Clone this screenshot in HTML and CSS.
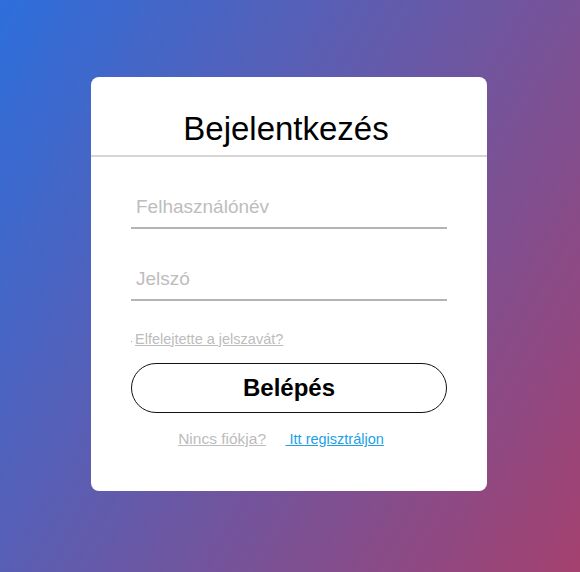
FILE: index.html
```html
<!DOCTYPE html>
<html lang="hu">
<head>
    <meta charset="UTF-8">
    <meta name="viewport" content="width=device-width, initial-scale=1.0">
    <title>Bejelentkezés</title>
    <link rel="stylesheet" href="styles.css">
</head>
<body>
    <div class="card">
        <h1 class="card-title">Bejelentkezés</h1>

        <form class="login-form" onsubmit="return false;">
            <input type="text" class="field" placeholder="Felhasználónév">
            <input type="password" class="field" placeholder="Jelszó">

            <div class="forgot">
                <span class="dot"></span>
                <a href="#">Elfelejtette a jelszavát?</a>
            </div>

            <button type="submit" class="login-btn">Belépés</button>

            <div class="signup">
                <a href="#" class="muted">Nincs fiókja?</a>
                <a href="#" class="register">&nbsp;Itt regisztráljon</a>
            </div>
        </form>
    </div>
</body>
</html>
```

FILE: styles.css
```css
html, body {
    height: 100%;
}
body {
    margin: 0;
    font-family: "Liberation Sans", Arial, sans-serif;
    background: linear-gradient(120deg, #2d6fdc, #a4416f);
    display: flex;
    justify-content: center;
    align-items: flex-start;
}
.card {
    background: white;
    width: 396px;
    margin: 77px 2px 0 0;
    border-radius: 8px;
}
.card-title {
    margin: 0;
    padding: 33px 6px 8px 0;
    font-size: 33px;
    font-weight: normal;
    line-height: 37px;
    text-align: center;
    color: #000;
    border-bottom: 2px solid #d6d6d6;
}
.login-form {
    padding: 30px 40px 43px;
}
.field {
    display: block;
    width: 100%;
    box-sizing: border-box;
    height: 42px;
    padding: 0 5px;
    margin: 0 0 30px;
    border: none;
    border-bottom: 2px solid #b4b4b4;
    outline: none;
    font-family: "Liberation Sans", Arial, sans-serif;
    font-size: 19px;
}
.field::placeholder {
    color: #bdbdbd;
}
.forgot {
    display: flex;
    align-items: center;
    height: 17px;
    margin-top: -1px;
}
.dot {
    width: 1px;
    height: 1px;
    background: #aaa;
    margin: 5px 3px 0 0;
}
.forgot a {
    font-size: 14.5px;
    color: #bcbcbc;
}
.login-btn {
    display: block;
    width: 100%;
    height: 50px;
    margin-top: 16px;
    border: 1px solid #111;
    border-radius: 25px;
    background: white;
    color: #000;
    font-family: "Liberation Sans", Arial, sans-serif;
    font-size: 24px;
    font-weight: bold;
    cursor: pointer;
}
.signup {
    margin-top: 17px;
    padding-right: 16px;
    text-align: center;
}
.signup .muted {
    font-size: 15.5px;
    color: #bcbcbc;
    margin-right: 15px;
}
.signup .register {
    font-size: 14.5px;
    color: #1c9fe8;
}
```
